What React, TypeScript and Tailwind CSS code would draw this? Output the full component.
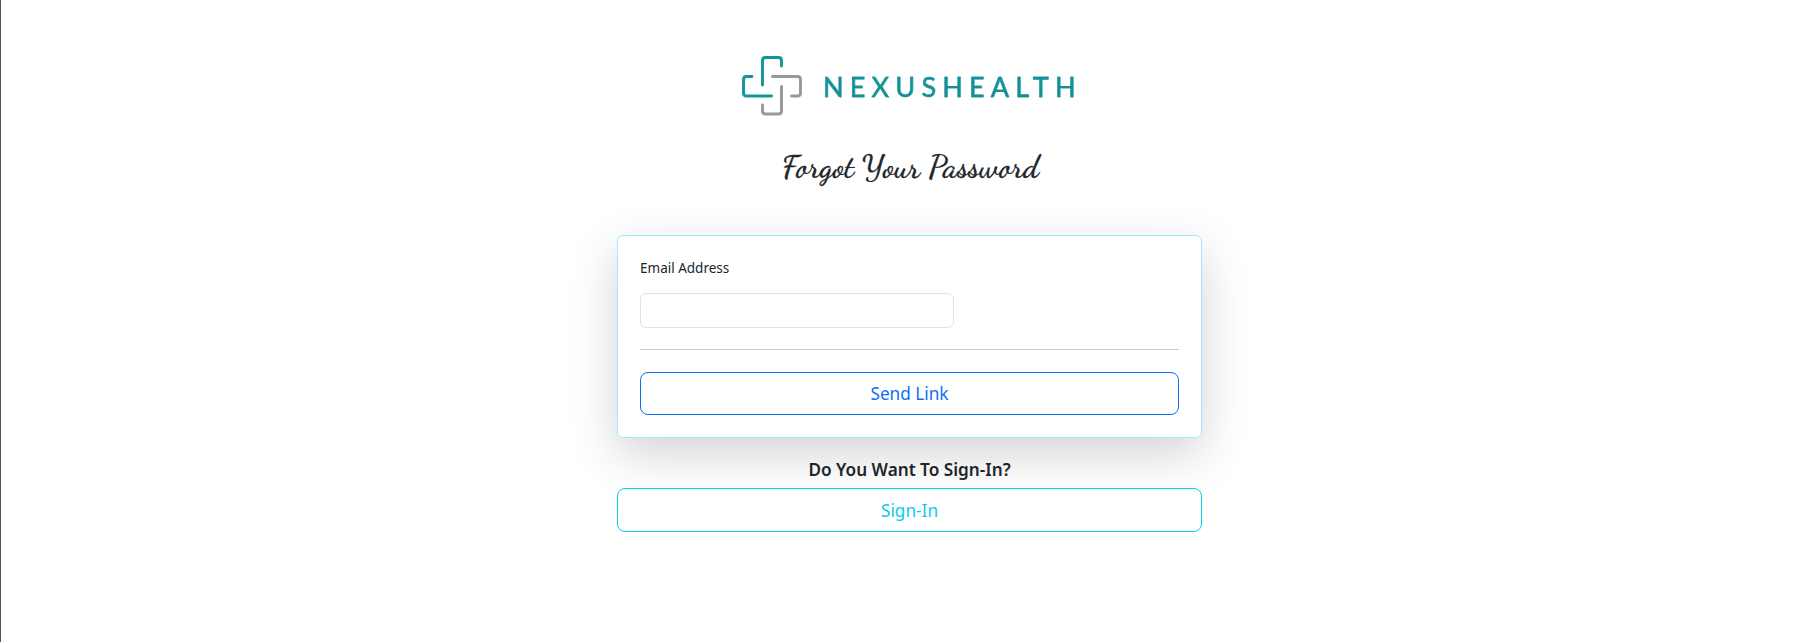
function NexusMark() {
  return (
    <svg width="62" height="62" viewBox="0 0 62 62" fill="none" strokeWidth="2.9" strokeLinecap="round" strokeLinejoin="round" className="shrink-0" aria-hidden="true">
      <g stroke="#98989a">
        <path d="M31.5 21.5H56.5Q59.5 21.5 59.5 24.5V38Q59.5 41 56.5 41H50.5" />
        <path d="M40.5 31.5V56Q40.5 59 37.5 59H24.5Q21.5 59 21.5 56V50" />
      </g>
      <g stroke="#12959b">
        <path d="M21.5 30V5.5Q21.5 2.5 24.5 2.5H37.5Q40.5 2.5 40.5 5.5V11" />
        <path d="M11 21.5H5.5Q2.5 21.5 2.5 24.5V38Q2.5 41 5.5 41H30.5" />
      </g>
    </svg>
  );
}

export default function App() {
  return (
    <div className="flex h-[642px] w-full justify-center border-l border-[#555] bg-white pl-[2px] font-['Noto_Sans','Open_Sans',sans-serif] text-[#212529]">
      <main className="flex w-[585px] flex-col">
        <div className="mt-[55px] flex h-[62px] items-center pl-[124px]">
          <NexusMark />
          <span className="ml-[20px] mt-[2px] whitespace-nowrap bg-linear-to-b from-[#0b999f] to-[#1b878c] bg-clip-text font-['Lato',sans-serif] text-[27px] leading-[62px] tracking-[6.2px] text-transparent [-webkit-text-stroke:0.4px_#12959b]">
            NEXUSHEALTH
          </span>
        </div>
        <h1 className="mt-[26px] h-[48px] whitespace-nowrap pl-[165px] font-['Dancing_Script',cursive] text-[32px] font-medium leading-[48px] [-webkit-text-stroke:0.3px_#212529]">
          Forgot Your Password
        </h1>
        <form className="relative mt-[44px] flex h-[203px] flex-col rounded-[6px] border border-[#9eeaf9] bg-white px-[22px] pt-[22px] shadow-[0_16px_48px_rgba(0,0,0,0.175)]" onSubmit={(e) => e.preventDefault()}>
          <label htmlFor="email" className="h-[21px] text-[13.5px] leading-[21px]">
            Email Address
          </label>
          <input id="email" type="email" className="mt-[14px] h-[35px] w-[314px] shrink-0 rounded-[6px] border border-[#dee2e6] bg-white px-3" />
          <hr className="mt-[21px] border-[#c7c8c9]" />
          <button type="submit" className="mt-[22px] h-[43px] shrink-0 rounded-[8px] border border-[#0d6efd] text-[17.2px] leading-[41px] text-[#0d6efd]">
            Send Link
          </button>
        </form>
        <p className="relative mt-[20px] h-[24px] text-center text-[17.2px] font-semibold leading-[24px]">Do You Want To Sign-In?</p>
        <button type="button" className="relative mt-[6px] h-[44px] rounded-[8px] border border-[#0dcaf0] text-[17.2px] leading-[41px] text-[#0dcaf0]">
          Sign-In
        </button>
      </main>
    </div>
  );
}
